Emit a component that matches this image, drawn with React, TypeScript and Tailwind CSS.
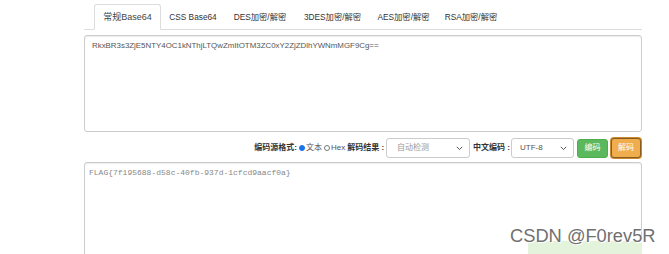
import React from "react";

const tabs = [
    { label: "常规Base64", w: "w-[67px]" },
    { label: "CSS Base64", w: "w-[64px]" },
    { label: "DES加密/解密", w: "w-[70px]" },
    { label: "3DES加密/解密", w: "w-[75px]" },
    { label: "AES加密/解密", w: "w-[67px]" },
    { label: "RSA加密/解密", w: "w-[68px]" },
];

function Chevron() {
    return (
        <svg width="7" height="5" viewBox="0 0 7 5" className="ml-auto">
            <path d="M0.8 0.8 L3.5 3.6 L6.2 0.8" fill="none" stroke="#555" strokeWidth="1" />
        </svg>
    );
}

export default function App() {
    return (
        <div
            className="w-[669px] h-[254px] overflow-hidden bg-white relative"
            style={{ fontFamily: '"Liberation Sans", "Noto Sans CJK SC", sans-serif' }}
        >
            <div className="ml-[84px] w-[558px] pt-[4px]">
                {/* Tabs */}
                <div className="flex border-b border-[#ddd] pl-[10px] h-[26px]">
                    {tabs.map((t, i) => (
                        <div
                            key={t.label}
                            className={`${t.w} text-center whitespace-nowrap leading-[25px] h-[26px] rounded-t-[3px] ${
                                i === 0
                                    ? "border border-[#ddd] border-b-white bg-white text-[#444] text-[9px] -mb-px"
                                    : "border border-transparent text-[#333] text-[8.3px]"
                            }`}
                        >
                            {t.label}
                        </div>
                    ))}
                </div>

                {/* Input */}
                <div className="mt-[5px] h-[97px] border border-[#ccc] rounded-[3px] shadow-[inset_0_1px_1px_rgba(0,0,0,0.075)] px-[7px] pt-[4px] text-[7.9px] text-[#555]">
                    RkxBR3s3ZjE5NTY4OC1kNThjLTQwZmItOTM3ZC0xY2ZjZDlhYWNmMGF9Cg==
                </div>

                {/* Controls */}
                <div className="mt-[6px] flex items-center justify-end h-[20px] text-[8px] text-[#333] pr-[1px]">
                    <span className="font-bold">编码源格式:</span>
                    <span className="w-[6px] h-[6px] rounded-full bg-[#1a73e8] border border-[#1a73e8] ml-[2px] mr-[1px]" />
                    <span className="text-[#555]">文本</span>
                    <span className="w-[6px] h-[6px] rounded-full border border-[#777] ml-[2px] mr-[1px]" />
                    <span className="text-[#555]">Hex</span>
                    <span className="font-bold ml-[2px] mr-[2px]">解码结果 :</span>
                    <div className="w-[84px] h-[20px] border border-[#ccc] rounded-[3px] flex items-center pl-[10px] pr-[6px] text-[#999]">
                        自动检测
                        <Chevron />
                    </div>
                    <span className="font-bold ml-[3px] mr-[1px]">中文编码 :</span>
                    <div className="w-[63px] h-[20px] border border-[#ccc] rounded-[3px] flex items-center pl-[8px] pr-[6px] text-[#555]">
                        UTF-8
                        <Chevron />
                    </div>
                    <div className="ml-[3px] w-[31px] h-[19px] rounded-[3px] bg-[#5cb85c] border border-[#4cae4c] text-white flex items-center justify-center">
                        编码
                    </div>
                    <div className="ml-[3px] w-[30px] h-[20px] rounded-[3px] bg-[#f0ad4e] border border-[#8a5a1e] shadow-[0_0_0_1px_#c78a34] text-white flex items-center justify-center">
                        解码
                    </div>
                </div>

                {/* Output */}
                <div
                    className="mt-[4px] h-[120px] border border-[#ccc] rounded-[3px] shadow-[inset_0_1px_1px_rgba(0,0,0,0.075)] px-[4px] pt-[4px] text-[8px] text-[#888]"
                    style={{ fontFamily: '"Liberation Mono", monospace' }}
                >
                    FLAG{"{"}7f195688-d58c-40fb-937d-1cfcd9aacf0a{"}"}
                </div>
            </div>

            {/* floating bar + watermark */}
            <div className="absolute left-[528px] top-[241px] w-[114px] h-[20px] bg-[#e3f3dc]" />
            <div
                className="absolute left-[510px] top-[225px] text-[18.3px] text-[#707070] leading-[22px]"
                style={{ textShadow: "0 0 1px #fff, 0 0 1px #fff, 1px 1px 0 #fff, -1px -1px 0 #fff" }}
            >
                CSDN @F0rev5R
            </div>
        </div>
    );
}
